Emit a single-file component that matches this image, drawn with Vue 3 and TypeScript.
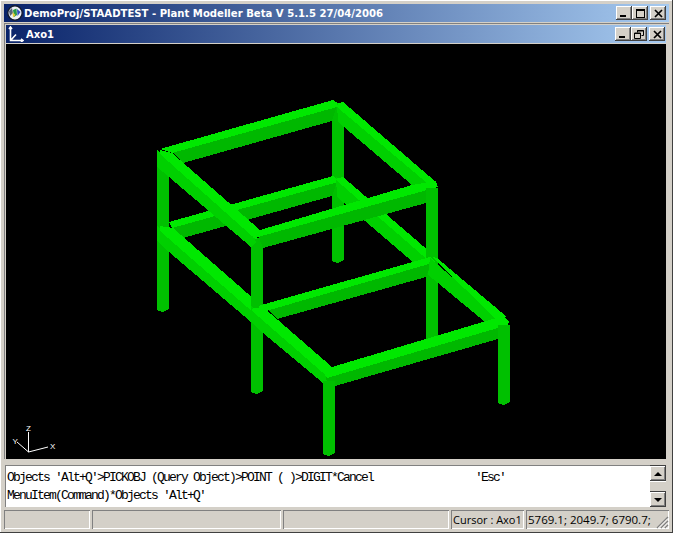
<script setup lang="ts">
type Poly = { p: string; c: string }
const L = '#00e800'
const M = '#00d000'
const D = '#00b800'
const line1 = "Objects 'Alt+Q'>PICKOBJ (Query Object)>POINT ( )>DIGIT*Cancel" + ' '.repeat(17) + "'Esc'"
const line2 = "MenuItem(Command)*Objects 'Alt+Q'"
const leg = (x: number, t: number, b: number): Poly => ({
  p: `${x},${t} ${x + 12},${t} ${x + 12},${b - 2} ${x + 6},${b + 1} ${x + 1},${b} ${x},${b - 3}`,
  c: '#00c000'
})
const polys: Poly[] = [
  leg(157, 155, 311),
  leg(332, 105, 262),
  // lower level back beam
  { p: '170,226 338,179 332,196 183,238', c: D },
  { p: '169,222 333,176 339,180 338,182 172,228', c: L },
  // long diagonal, far part
  { p: '336,177 430,258 430,262 428,275 344,203 337,197', c: M },
  { p: '335,179 343,177 437,258 430,262', c: L },
  // left long diagonal, far part
  { p: '157,226 255,312 255,316 251,322 169,252 157,241', c: M },
  { p: '160,226 173,228 263,307 255,314 160,231', c: L },
  leg(251, 238, 393),
  leg(426, 188, 340),
  // cross beam
  { p: '266,307 432,260 426,277 277,319', c: D },
  { p: '258,306 430,257 436,262 266,311', c: L },
  // diagonals, near parts
  { p: '430,258 497,316 497,320 485,322 438,283 428,275', c: M },
  { p: '432,257 437,258 507,317 497,320', c: L },
  { p: '251,306 322,368 329,380 323,383 263,333 251,322', c: M },
  { p: '254,308 263,307 332,367 328,378 322,372 251,310', c: L },
  // lower front beam
  { p: '326,376 508,323 508,325 498,339 335,386 327,383', c: D },
  { p: '325,376 332,367 503,316 509,322 508,325 327,378', c: L },
  leg(498, 325, 404),
  leg(323, 381, 455),
  // top frame
  { p: '172,151 337,105 332,121 183,163', c: D },
  { p: '160,149 333,100 338,103 337,107 172,153', c: L },
  { p: '337,103 427,179 427,183 412,185 344,127 338,122', c: M },
  { p: '338,103 343,102 436,182 427,183 337,107', c: L },
  { p: '157,150 252,232 256,242 251,247 169,177 157,167', c: M },
  { p: '160,150 172,153 260,230 256,240 252,236 160,154', c: L },
  { p: '258,235 436,185 436,187 426,203 263,248', c: D },
  { p: '252,238 260,230 412,185 436,181 438,187 258,237', c: L },
  { p: '426,188 438,188 438,206 426,206', c: '#00c000' },
]
</script>

<template>
  <div class="frame">
    <div class="title main">
      <svg class="appicon" viewBox="0 0 16 16" width="16" height="16">
        <circle cx="8" cy="8" r="7.2" fill="#eef0f4" stroke="#141c30" stroke-width="1.4" />
        <path d="M2 6 L5 3 L6 8 L3 11Z" fill="#5a6478" />
        <path d="M6 5 L9.5 3.5 L10 10 L7 12Z" fill="#2a9a4a" />
        <path d="M5.5 7 L8.5 10 L6 12.5Z" fill="#e8c830" />
        <path d="M10 4 L13.5 7 L10.5 11Z" fill="#3050c0" />
      </svg>
      <span class="caption">DemoProj/STAADTEST - Plant Modeller Beta V 5.1.5 27/04/2006</span>
      <div class="btns mainbtns">
        <button class="btn"><i class="min"></i></button>
        <button class="btn gap-r"><i class="max"></i></button>
        <button class="btn"><svg width="9" height="9" viewBox="0 0 9 9"><path d="M1 1 L8 8 M8 1 L1 8" stroke="#000" stroke-width="1.7" /></svg></button>
      </div>
    </div>
    <div class="child">
      <div class="title sub">
        <svg class="axoicon" viewBox="0 0 16 16" width="16" height="16">
          <path d="M2.5 1 V14.5 H15 M1 3 L2.5 1 L4 3 M13 13 L15 14.5 L13 16 M3 14 L8 8.5" stroke="#fff" stroke-width="1.6" fill="none" />
        </svg>
        <span class="caption small">Axo1</span>
        <div class="btns">
          <button class="btn"><i class="min"></i></button>
          <button class="btn gap-r">
            <svg width="10" height="9" viewBox="0 0 10 9"><path d="M3.5 2.5 V0.5 H9.5 V5.5 H7.5 M0.5 3 H6.5 V8.5 H0.5Z" stroke="#000" fill="none" /><path d="M3 1 H10 M0 3.5 H7" stroke="#000" /></svg>
          </button>
          <button class="btn"><svg width="9" height="9" viewBox="0 0 9 9"><path d="M1 1 L8 8 M8 1 L1 8" stroke="#000" stroke-width="1.7" /></svg></button>
        </div>
      </div>
      <div class="view">
        <svg class="scene" width="660" height="415" viewBox="6 44 660 415" shape-rendering="crispEdges">
          <polygon v-for="(g, i) in polys" :key="i" :points="g.p" :fill="g.c" />
          <g stroke="#fff" stroke-width="1" fill="none" shape-rendering="auto">
            <path d="M28.5 452 V432 M28.5 452 L17 442 M28.5 452 L48 447" />
          </g>
          <text x="26" y="431" class="ax">Z</text>
          <text x="12.5" y="444" class="ax">Y</text>
          <text x="50" y="449" class="ax">X</text>
        </svg>
      </div>
    </div>
    <div class="console">
      <div class="log">
        <div>{{ line1 }}</div>
        <div>{{ line2 }}</div>
      </div>
      <div class="scroll">
        <button class="sb"><i class="up"></i></button>
        <div class="track"></div>
        <button class="sb"><i class="down"></i></button>
      </div>
    </div>
    <div class="status">
      <div class="cell w1"></div>
      <div class="cell w2"></div>
      <div class="cell w3"></div>
      <div class="cell w4">Cursor : Axo1</div>
      <div class="cell w5">5769.1; 2049.7; 6790.7;</div>
      <svg class="grip" width="14" height="14" viewBox="0 0 14 14">
        <path d="M13 2 L2 13 M13 6 L6 13 M13 10 L10 13" stroke="#808080" stroke-width="1.4" />
        <path d="M13 3.5 L3.5 13 M13 7.5 L7.5 13 M13 11.5 L11.5 13" stroke="#fff" />
      </svg>
    </div>
  </div>
</template>

<style>
html, body { margin: 0; background: #d4d0c8; }
</style>

<style scoped>
.frame {
  width: 673px; height: 533px; box-sizing: border-box; overflow: hidden;
  background: #d4d0c8; position: relative;
  border-right: 1px solid #404040; border-bottom: 1px solid #404040;
  box-shadow: inset 1px 1px 0 #fff;
  padding: 4px 3px 0 4px;
  display: flex; flex-direction: column;
  font-family: "Liberation Sans", sans-serif;
}
.title {
  display: flex; align-items: center; flex: none; color: #fff;
  background: linear-gradient(90deg, #0a246a, #a6caf0);
}
.main { height: 18px; }
.appicon { margin: 0 1px 0 3px; flex: none; }
.caption { font: bold 10.1px "DejaVu Sans", sans-serif; white-space: nowrap; }
.small { font-size: 10px; }
.btns { margin-left: auto; display: flex; padding-right: 1px; }
.mainbtns { padding-right: 3px; }
.btn {
  width: 16px; height: 14px; padding: 0; margin: 0; display: flex; align-items: center; justify-content: center;
  background: #d4d0c8; border: 0;
  box-shadow: inset -1px -1px 0 #404040, inset 1px 1px 0 #fff, inset -2px -2px 0 #808080;
  position: relative;
}
.gap-r { margin-right: 2px; }
.min { display: block; width: 6px; height: 2px; background: #000; margin: 6px 3px 0 0; }
.max { display: block; width: 9px; height: 9px; box-sizing: border-box; border: 1px solid #000; border-top-width: 2px; }
.child {
  flex: none; display: flex; flex-direction: column; padding: 2px 3px 0 2px; margin-top: 1px;
  box-shadow: inset 1px 1px 0 #808080;
}
.sub { height: 18px; margin-bottom: 1px; box-shadow: 0 1px 0 #d4d0c8; }
.axoicon { margin: 0 2px 0 2px; flex: none; }
.view { height: 415px; background: #000; }
.scene { display: block; }
.ax { font: 8px "Liberation Sans", sans-serif; fill: #fff; }
.console {
  flex: none; display: flex; height: 42px; margin: 6px 3px 0 1px; background: #fff;
  box-shadow: inset 1px 1px 0 #808080;
  position: relative;
}
.log {
  flex: 1; padding: 4px 0 0 2px; font: 13px/18px "Liberation Mono", monospace; letter-spacing: -1.8px;
  white-space: pre; color: #000; overflow: hidden;
}
.scroll { width: 16px; flex: none; display: flex; flex-direction: column; background: #d4d0c8; padding-top: 1px; box-sizing: border-box; }
.sb {
  width: 16px; height: 15px; padding: 0; border: 0; background: #d4d0c8; display: flex; align-items: center; justify-content: center; flex: none;
  box-shadow: inset -1px -1px 0 #404040, inset 1px 1px 0 #fff, inset -2px -2px 0 #808080, 0 -1px 0 #404040;
}
.track { flex: 1; background: #d4d0c8; box-shadow: inset 0 1px 0 #fff; }
.up, .down { display: block; width: 0; height: 0; border-left: 4px solid transparent; border-right: 4px solid transparent; }
.up { border-bottom: 4px solid #000; }
.down { border-top: 4px solid #000; }
.status { flex: none; display: flex; height: 20px; margin-top: 3px; gap: 2px; font: 11.5px "Open Sans", sans-serif; color: #000; position: relative; }
.cell { box-sizing: border-box; height: 19px; box-shadow: inset 1px 1px 0 #808080, inset -1px -1px 0 #fff; padding: 1px 2px; white-space: nowrap; overflow: hidden; line-height: 18px; }
.w1 { width: 86px; }
.w2 { width: 189px; }
.w3 { width: 166px; }
.w4 { width: 73px; font-size: 11px; }
.w5 { flex: 1; }
.grip { position: absolute; right: 0; bottom: 1px; }
</style>
